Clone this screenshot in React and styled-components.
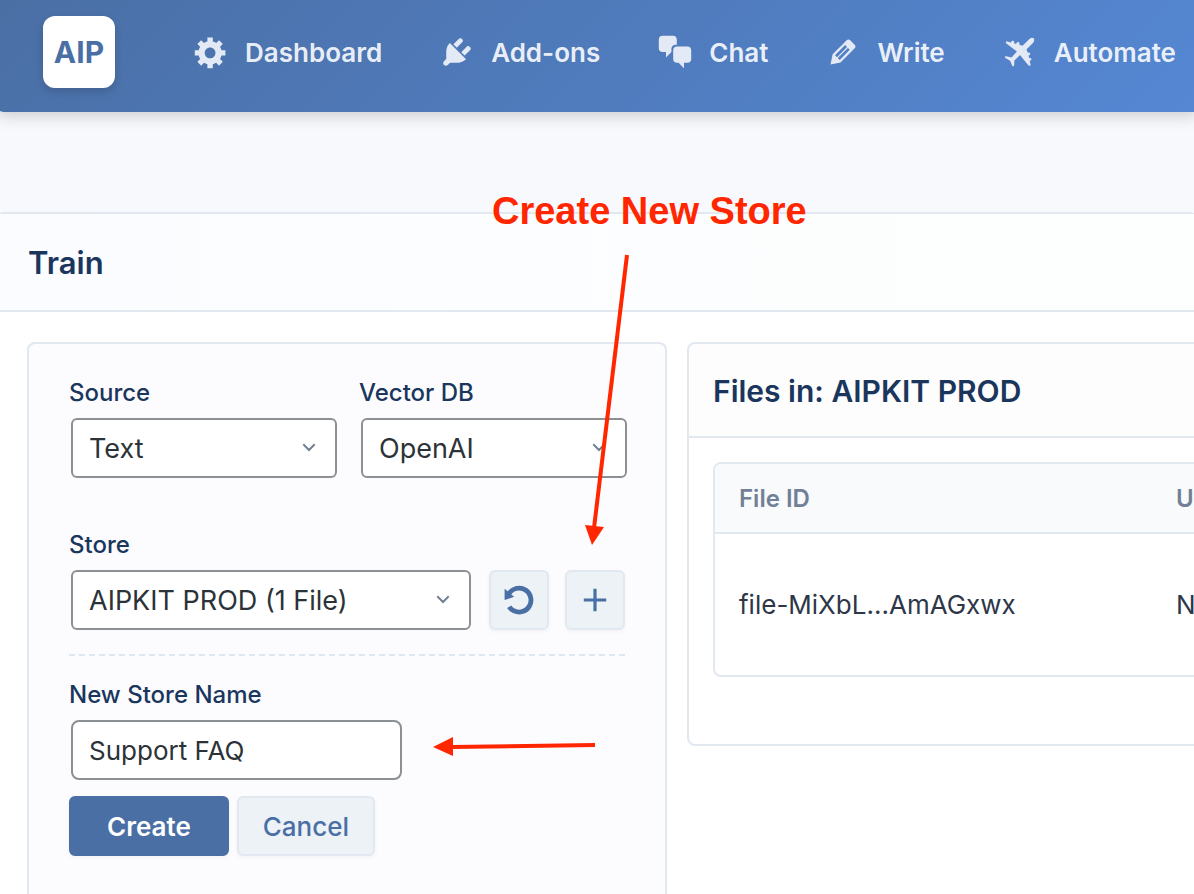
import { useState } from "react";
import styled, { createGlobalStyle, css } from "styled-components";

const GlobalStyle = createGlobalStyle`
  * {
    box-sizing: border-box;
  }
  body {
    margin: 0;
    background: #f8f9fd;
    color: #2d3748;
    font-family: Inter, "Liberation Sans", sans-serif;
    overflow-x: hidden;
  }
  button,
  input,
  select {
    font-family: inherit;
  }
`;

const Page = styled.div`
  position: relative;
  min-height: 100vh;
  display: flex;
  flex-direction: column;
  overflow: hidden;
`;

const Header = styled.header`
  display: flex;
  align-items: center;
  gap: 78px;
  height: 112px;
  margin: 0 -4px;
  padding: 0 0 8px 47px;
  background: linear-gradient(135deg, #4a6fa5 0%, #5587d3 100%);
  border-bottom-left-radius: 8px;
  box-shadow: 0 4px 16px rgba(0, 0, 0, 0.18);
`;

const Logo = styled.a`
  display: flex;
  align-items: center;
  justify-content: center;
  flex: none;
  width: 72px;
  height: 72px;
  border-radius: 12px;
  background: #fff;
  box-shadow: 0 4px 8px rgba(0, 0, 0, 0.15);
  color: #4a6fa5;
  font-size: 30px;
  font-weight: 700;
  text-decoration: none;
`;

const Nav = styled.nav`
  display: flex;
  gap: 57px;
`;

const NavLink = styled.a`
  display: flex;
  align-items: center;
  gap: 16px;
  color: rgba(255, 255, 255, 0.9);
  font-size: 26px;
  font-weight: 600;
  text-decoration: none;
  white-space: nowrap;
`;

const NavIcon = styled.svg`
  flex: none;
  width: 36px;
  height: 36px;
  fill: #e4eaf5;
`;

const Main = styled.main`
  flex: 1;
  display: flex;
  flex-direction: column;
  margin: 100px -4px 0 -4px;
  border: 2px solid #e2e8f0;
  border-bottom: 0;
  border-radius: 8px 8px 0 0;
  background: #fff;
`;

const TitleBar = styled.div`
  padding: 29px 30px 27px;
  border-bottom: 2px solid #e2e8f0;
  background: linear-gradient(90deg, #fbfcff, #fdfffe);
`;

const Title = styled.h1`
  margin: 0;
  color: #1a365d;
  font-size: 31px;
  line-height: 40px;
  font-weight: 600;
`;

const Columns = styled.div`
  flex: 1;
  display: flex;
  align-items: flex-start;
  gap: 20px;
  padding: 30px 0 0 29px;
`;

const Panel = styled.section`
  border: 2px solid #e2e8f0;
  border-radius: 8px;
  background: #fff;
`;

const FormPanel = styled(Panel)`
  flex: none;
  align-self: stretch;
  width: 640px;
  padding: 34px 38px 34px 40px;
  border-bottom: 0;
  border-radius: 8px 8px 0 0;
  background: #fcfcff;
`;

const FilesPanel = styled(Panel)`
  flex: 1;
  min-width: 560px;
  padding-bottom: 67px;
`;

const Row = styled.div`
  display: flex;
  align-items: flex-end;
  gap: ${({ $gap }) => $gap};
`;

const Field = styled.div`
  display: flex;
  flex-direction: column;
  width: ${({ $width }) => $width};
`;

const Label = styled.label`
  color: #1a365d;
  font-size: 24px;
  line-height: 30px;
  font-weight: 500;
`;

const control = css`
  width: 100%;
  height: 60px;
  padding: 0 16px;
  border: 2px solid #8c8f94;
  border-radius: 6px;
  background: #fff;
  color: #2c3338;
  font-size: 27px;
`;

const SelectBox = styled.div`
  display: grid;
  align-items: center;
  margin: 10px 0 0 2px;

  > * {
    grid-area: 1 / 1;
  }
`;

const Select = styled.select`
  ${control}
  appearance: none;
`;

const Chevron = styled.svg`
  justify-self: end;
  width: 14px;
  height: 10px;
  margin-right: 21px;
  fill: none;
  stroke: #718096;
  stroke-width: 2;
  stroke-linecap: square;
  pointer-events: none;
`;

const TextInput = styled.input`
  ${control}
  width: 331px;
  margin: 10px 0 0 2px;
  border-radius: 8px;
  font-size: 26px;
`;

const Button = styled.button`
  height: 60px;
  border: 2px solid ${({ $primary }) => ($primary ? "#4a6fa5" : "#e2e8f0")};
  border-radius: 6px;
  padding: 0 ${({ $primary }) => ($primary ? "36px" : "24px")};
  background: ${({ $primary }) => ($primary ? "#4a6fa5" : "#edf2f7")};
  color: ${({ $primary }) => ($primary ? "#fff" : "#4a6fa5")};
  box-shadow: 0 2px 4px rgba(0, 0, 0, 0.04);
  font-size: 26px;
  font-weight: ${({ $primary }) => ($primary ? 600 : 500)};
  cursor: pointer;
`;

const IconButton = styled(Button)`
  display: flex;
  align-items: center;
  justify-content: center;
  flex: none;
  width: 60px;
  padding: 0;

  svg {
    width: 32px;
    height: 32px;
    fill: currentColor;
  }
`;

const StoreRow = styled(Row)`
  margin-top: 52px;
`;

const NewStore = styled.form`
  display: flex;
  flex-direction: column;
  width: 556px;
  margin-top: 24px;
  padding-top: 26px;
  /* dashed line with fixed 6px dash and 4px space */
  background: repeating-linear-gradient(90deg, #dfe8f0 0 6px, transparent 6px 10px)
    top / 100% 2px no-repeat;
`;

const Actions = styled.div`
  display: flex;
  gap: 8px;
  margin-top: 16px;
`;

const FilesHeader = styled.div`
  padding: 27px 24px 25px;
  border-bottom: 2px solid #e2e8f0;
  border-radius: 8px 8px 0 0;
  background: #fdfdfe;
`;

const FilesTitle = styled.h2`
  margin: 0;
  color: #1a365d;
  font-size: 30px;
  line-height: 40px;
  font-weight: 600;
`;

const TableFrame = styled.div`
  margin: 24px 24px 0;
  border: 2px solid #e2e8f0;
  border-radius: 8px;
  overflow: hidden;
`;

const Table = styled.table`
  width: 100%;
  table-layout: fixed;
  border-collapse: collapse;
  text-align: left;
`;

const Th = styled.th`
  width: ${({ $width }) => $width};
  height: 69px;
  padding: 0 0 0 24px;
  border-bottom: 2px solid #e2e8f0;
  background: #f8fafc;
  color: #718096;
  font-size: 24px;
  font-weight: 600;
`;

const Td = styled.td`
  height: 142px;
  padding: 0 0 0 24px;
  font-size: 26px;
`;

const Callout = styled.p`
  position: absolute;
  top: 188px;
  left: 492px;
  margin: 0;
  color: #ff2600;
  font-family: "Liberation Sans", Arial, sans-serif;
  font-size: 38px;
  line-height: 46px;
  font-weight: 700;
  white-space: nowrap;
`;

const Arrow = styled.svg`
  position: absolute;
  top: ${({ $top }) => $top};
  left: ${({ $left }) => $left};
  fill: #ff2600;
  stroke: #ff2600;
  pointer-events: none;
`;

const Dropdown = ({ id, value, onChange, options }) => (
  <SelectBox>
    <Select id={id} value={value} onChange={(e) => onChange(e.target.value)}>
      {options.map((option) => (
        <option key={option}>{option}</option>
      ))}
    </Select>
    <Chevron viewBox="0 0 14 10">
      <path d="M2 2l5 5 5-5" />
    </Chevron>
  </SelectBox>
);

const App = () => {
  const [source, setSource] = useState("Text");
  const [vectorDb, setVectorDb] = useState("OpenAI");
  const [store, setStore] = useState("AIPKIT PROD (1 File)");
  const [storeName, setStoreName] = useState("Support FAQ");

  return (
    <Page>
      <GlobalStyle />
      <Header>
        <Logo href="#">AIP</Logo>
        <Nav>
          {navItems.map((item) => (
            <NavLink href="#" key={item.name}>
              <NavIcon viewBox="0 0 20 20">
                <path d={item.icon} />
              </NavIcon>
              {item.name}
            </NavLink>
          ))}
        </Nav>
      </Header>

      <Main>
        <TitleBar>
          <Title>Train</Title>
        </TitleBar>
        <Columns>
          <FormPanel>
            <Row $gap="22px">
              <Field $width="268px">
                <Label htmlFor="source">Source</Label>
                <Dropdown
                  id="source"
                  value={source}
                  onChange={setSource}
                  options={["Text"]}
                />
              </Field>
              <Field $width="268px">
                <Label htmlFor="vector-db">Vector DB</Label>
                <Dropdown
                  id="vector-db"
                  value={vectorDb}
                  onChange={setVectorDb}
                  options={["OpenAI"]}
                />
              </Field>
            </Row>

            <StoreRow $gap="18px">
              <Field $width="402px">
                <Label htmlFor="store">Store</Label>
                <Dropdown
                  id="store"
                  value={store}
                  onChange={setStore}
                  options={["AIPKIT PROD (1 File)"]}
                />
              </Field>
              <Row $gap="16px">
                <IconButton type="button" aria-label="Refresh">
                  <svg viewBox="0 0 20 20">
                    <path d={rotateIcon} />
                  </svg>
                </IconButton>
                <IconButton type="button" aria-label="Add">
                  <svg viewBox="0 0 20 20">
                    <path d="M17 9v2h-6v6H9v-6H3V9h6V3h2v6h6z" />
                  </svg>
                </IconButton>
              </Row>
            </StoreRow>

            <NewStore onSubmit={(e) => e.preventDefault()}>
              <Label htmlFor="store-name">New Store Name</Label>
              <TextInput
                id="store-name"
                type="text"
                value={storeName}
                onChange={(e) => setStoreName(e.target.value)}
              />
              <Actions>
                <Button type="submit" $primary>
                  Create
                </Button>
                <Button type="button">Cancel</Button>
              </Actions>
            </NewStore>
          </FormPanel>

          <FilesPanel>
            <FilesHeader>
              <FilesTitle>Files in: AIPKIT PROD</FilesTitle>
            </FilesHeader>
            <TableFrame>
              <Table>
                <thead>
                  <tr>
                    <Th $width="437px">File ID</Th>
                    <Th>U</Th>
                  </tr>
                </thead>
                <tbody>
                  <tr>
                    <Td>file-MiXbL...AmAGxwx</Td>
                    <Td>N</Td>
                  </tr>
                </tbody>
              </Table>
            </TableFrame>
          </FilesPanel>
        </Columns>
      </Main>

      <Callout>Create New Store</Callout>
      <Arrow $top="254px" $left="580px" width="52" height="294">
        <path d="M47 1L14 274" fill="none" strokeWidth="4" />
        <path d="M5 271l19 2-12 18z" stroke="none" />
      </Arrow>
      <Arrow $top="734px" $left="430px" width="168" height="26">
        <path d="M165 11L22 13" fill="none" strokeWidth="4" />
        <path d="M3 13l20-10v19z" stroke="none" />
      </Arrow>
    </Page>
  );
};

export default App;

const rotateIcon =
  "M10.25 1.02c5.1 0 8.75 4.04 8.75 9s-3.65 9-8.75 9c-3.2 0-6.02-1.59-7.68-3.99l2.59-1.52c1.1 1.5 2.86 2.51 4.84 2.51 3.3 0 6-2.79 6-6s-2.7-6-6-6c-1.97 0-3.72 1-4.82 2.49L7 8.02l-6 2v-7L2.89 4.6c1.69-2.17 4.36-3.58 7.36-3.58z";

const navItems = [
  {
    name: "Dashboard",
    icon: "M18 12h-2.18c-.17.7-.44 1.35-.81 1.93l1.54 1.54-2.1 2.1-1.54-1.54c-.58.36-1.23.63-1.91.79V19H8v-2.18c-.68-.16-1.33-.43-1.91-.79l-1.54 1.54-2.12-2.12 1.54-1.54c-.36-.58-.63-1.23-.79-1.91H1V9.03h2.17c.16-.7.44-1.35.8-1.94L2.43 5.55l2.1-2.1 1.54 1.54c.58-.37 1.24-.64 1.93-.81V2h3v2.18c.68.16 1.33.43 1.91.79l1.54-1.54 2.12 2.12-1.54 1.54c.36.59.64 1.24.8 1.94H18V12zm-8.5 1.5c1.66 0 3-1.34 3-3s-1.34-3-3-3-3 1.34-3 3 1.34 3 3 3z",
  },
  {
    name: "Add-ons",
    icon: "M13.11 4.36L9.87 7.6 8 5.73l3.24-3.24c.35-.34 1.05-.2 1.56.32.52.51.66 1.21.31 1.55zm-8 1.77l.91-1.12 9.01 9.01-1.19.84c-.71.71-2.63 1.16-3.82 1.16H6.14L4.9 17.26c-.59.59-1.54.59-2.12 0-.59-.58-.59-1.53 0-2.12l1.24-1.24v-3.88c0-1.13.4-3.19 1.09-3.89zm7.26 3.97l3.24-3.24c.34-.35 1.04-.21 1.55.31.52.51.66 1.21.31 1.55l-3.24 3.25z",
  },
  {
    name: "Chat",
    icon: "M11 6h-.82C9.07 6 8 7.2 8 8.16V10l-3 3v-3H3c-1.1 0-2-.9-2-2V3c0-1.1.9-2 2-2h6c1.1 0 2 .9 2 2v3zm0 1h6c1.1 0 2 .9 2 2v5c0 1.1-.9 2-2 2h-2v3l-3-3h-1c-1.1 0-2-.9-2-2V9c0-1.1.9-2 2-2z",
  },
  {
    name: "Write",
    icon: "M13.89 3.39l2.71 2.72c.46.46.42 1.24.03 1.64l-8.01 8.02-5.56 1.16 1.16-5.58s7.6-7.63 7.99-8.03c.39-.39 1.22-.39 1.68.07zm-2.73 2.79l-5.59 5.61 1.11 1.11 5.54-5.65zm-2.97 8.23l5.58-5.6-1.07-1.08-5.59 5.6z",
  },
  {
    name: "Automate",
    icon: "M17.6 2.4C17 1.9 16.100 2 15.400 2.600L11.400 6.500L9.600 6C9.900 5.300 9.600 4.600 9 4.500C8.500 4.400 8.100 4.800 7.900 5.500L6.700 5.200C6.900 4.500 6.700 3.900 6.100 3.800C5.600 3.700 5.200 4.100 5 4.700L2.300 4C2 4.500 2.100 5 2.600 5.400L8.300 9.700L5.300 13L2.300 12.400C1.800 12.400 1.500 12.900 1.700 13.200L4.500 14.800L5.700 17.700C5.900 18.100 6.500 18 6.700 17.600L6.900 14.700L10 11.700L14.500 17.200C14.900 17.700 15.500 17.700 15.900 17.300L15.400 14.900C16.100 14.700 16.500 14.200 16.300 13.800C16.200 13.300 15.700 13.200 15.100 13.300L14.700 12C15.400 11.800 15.800 11.300 15.600 10.900C15.500 10.400 14.900 10.200 14.300 10.400L13.600 8.600L17.300 4.800C17.900 4.100 18.100 3.100 17.600 2.400Z",
  },
];
